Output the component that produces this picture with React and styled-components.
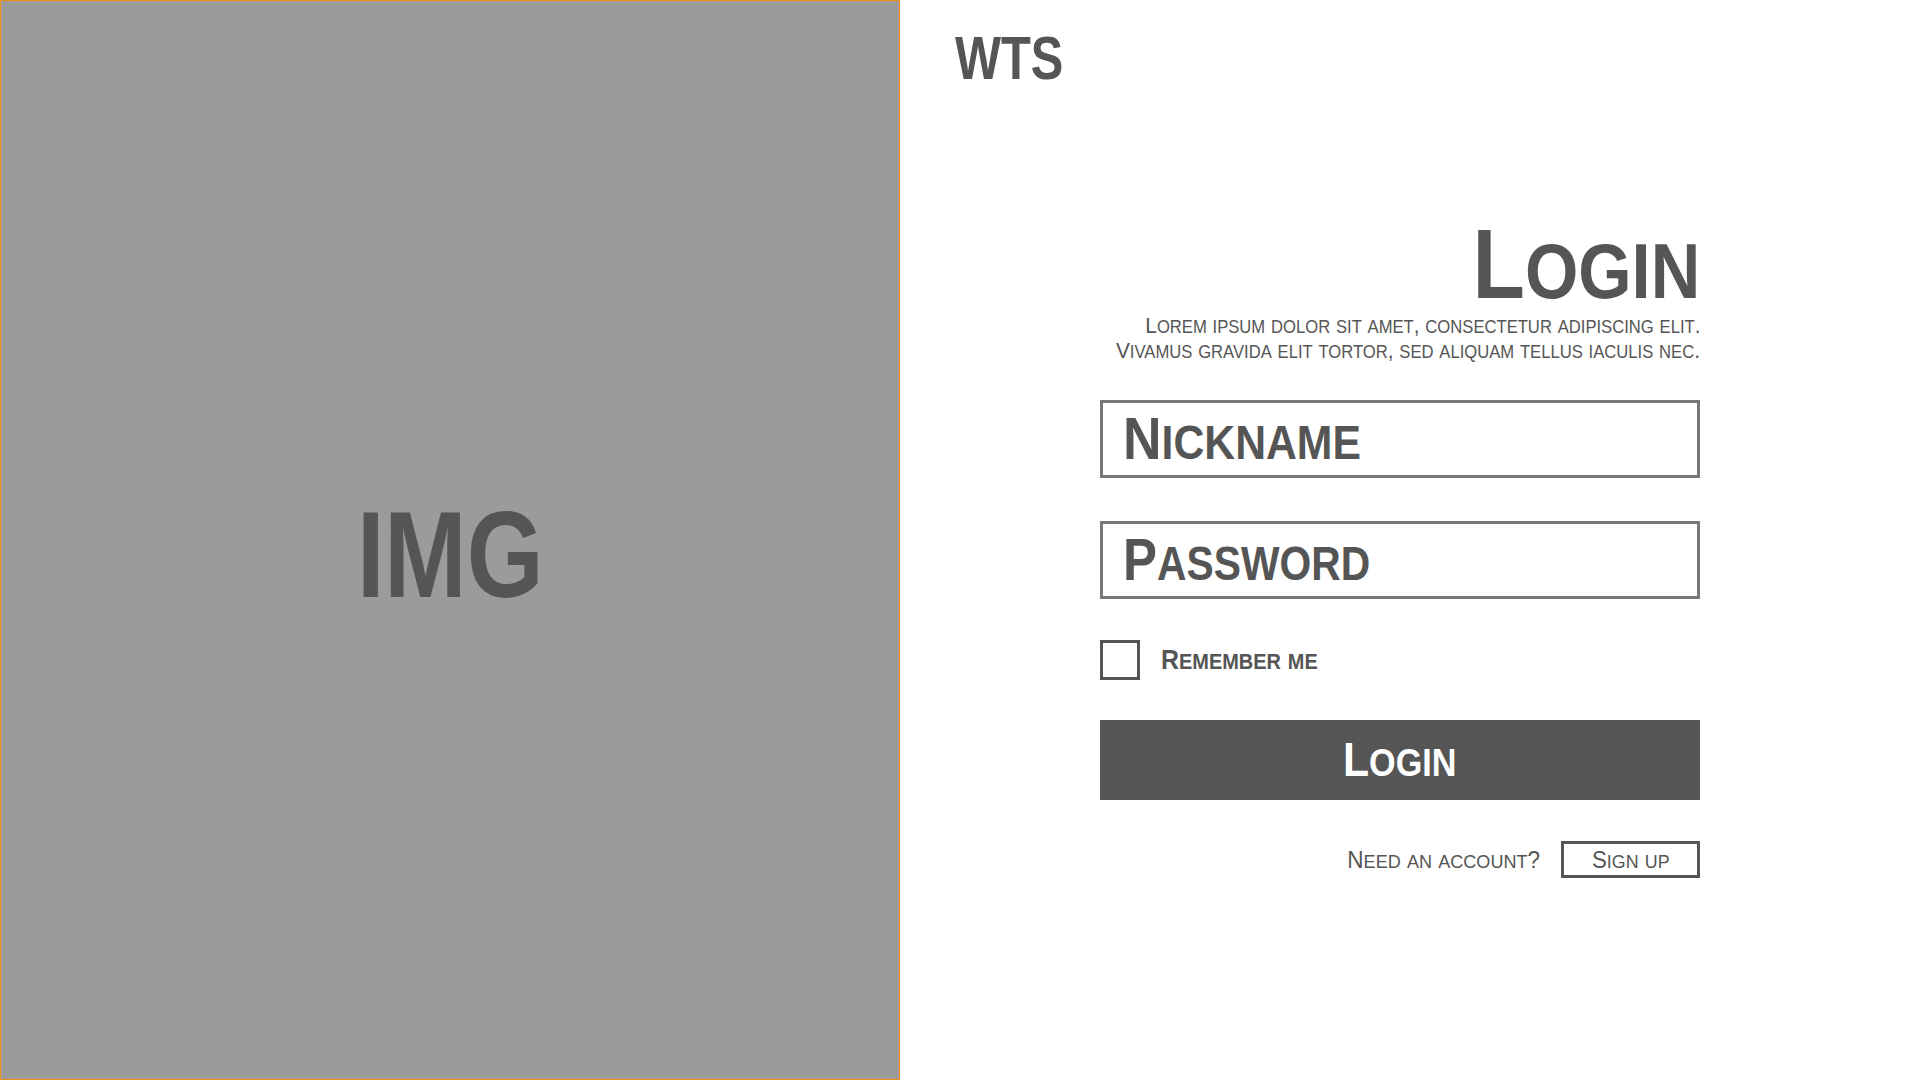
import React from "react";
import styled, { createGlobalStyle } from "styled-components";

const Global = createGlobalStyle`
  html, body { margin: 0; padding: 0; background: #ffffff; }
  body { font-family: "Liberation Sans", Arial, sans-serif; color: #555555; }
  * { box-sizing: border-box; }
`;

const Page = styled.div`
  display: grid;
  grid-template-columns: 900px 1fr;
  width: 1920px;
  height: 1080px;
  overflow: hidden;
`;

const ImagePanel = styled.div`
  background: #9b9b9b;
  border: 1px solid #f5901e;
  display: flex;
  align-items: center;
  justify-content: center;
`;

const ImgLabel = styled.span`
  font-weight: 700;
  font-size: 122px;
  line-height: 1;
  color: #555555;
  margin-top: 30px;
`;

const Side = styled.div`
  display: flex;
  flex-direction: column;
  align-items: flex-start;
  padding: 28px 0 0 55px;
`;

const Logo = styled.div`
  font-weight: 700;
  font-size: 61px;
  line-height: 1;
`;

const Form = styled.div`
  width: 600px;
  margin-left: 145px;
  margin-top: 126px;
  display: flex;
  flex-direction: column;
`;

const Title = styled.h1`
  margin: 0;
  font-weight: 700;
  font-size: 98px;
  line-height: 1;
  text-align: right;
`;

const Lead = styled.p`
  margin: 1px 0 0;
  font-size: 22px;
  line-height: 24px;
`;

const LeadLine = styled.span`
  display: flex;
  justify-content: flex-end;
`;

const Field = styled.div`
  margin-top: ${(p) => p.$gap}px;
  height: 78px;
  border: 3px solid #777777;
  display: flex;
  align-items: center;
  padding-left: 20px;
  font-weight: 700;
  font-size: 60px;
  line-height: 1;
`;

const CheckRow = styled.label`
  margin-top: 41px;
  display: flex;
  align-items: center;
  gap: 21px;
  font-weight: 700;
  font-size: 28px;
  line-height: 1;
`;

const Box = styled.span`
  width: 40px;
  height: 40px;
  border: 3px solid #555555;
  background: #ffffff;
`;

const SubmitButton = styled.button`
  margin-top: 40px;
  height: 80px;
  border: none;
  background: #555555;
  color: #ffffff;
  font-family: inherit;
  font-weight: 700;
  font-size: 48px;
  line-height: 1;
  padding: 0;
`;

const Footer = styled.div`
  margin-top: 41px;
  display: flex;
  justify-content: flex-end;
  align-items: center;
  gap: 21px;
  font-size: 24px;
  line-height: 1;
`;

const SignUp = styled.button`
  width: 139px;
  height: 37px;
  border: 3px solid #555555;
  background: #ffffff;
  color: #555555;
  font-family: inherit;
  font-size: 24px;
  line-height: 1;
  padding: 0;
`;

/* narrow face: the reference is set in a condensed sans */
const Squeeze = styled.span`
  display: inline-block;
  flex-shrink: 0;
  white-space: nowrap;
  transform: scaleX(${(p) => p.$sx});
  transform-origin: ${(p) => p.$origin || "center"};
`;

const Lower = styled.span`
  font-size: ${(p) => p.$ratio}em;
  text-transform: uppercase;
`;

function Caps({ children, ratio = 0.8 }) {
  const parts = children.split(/([a-z]+)/);
  return parts.map((p, i) =>
    i % 2 ? (
      <Lower key={i} $ratio={ratio}>
        {p}
      </Lower>
    ) : (
      <React.Fragment key={i}>{p}</React.Fragment>
    )
  );
}

export default function App() {
  return (
    <>
      <Global />
      <Page>
        <ImagePanel>
          <ImgLabel>
            <Squeeze $sx={0.81}>IMG</Squeeze>
          </ImgLabel>
        </ImagePanel>
        <Side>
          <Logo>
            <Squeeze $sx={0.8} $origin="left">WTS</Squeeze>
          </Logo>
          <Form>
            <Title>
              <Squeeze $sx={0.875} $origin="right">
                <Caps>Login</Caps>
              </Squeeze>
            </Title>
            <Lead>
              <LeadLine>
                <Squeeze $sx={0.945} $origin="right">
                  <Caps>Lorem ipsum dolor sit amet, consectetur adipiscing elit.</Caps>
                </Squeeze>
              </LeadLine>
              <LeadLine>
                <Squeeze $sx={0.945} $origin="right">
                  <Caps>Vivamus gravida elit tortor, sed aliquam tellus iaculis nec.</Caps>
                </Squeeze>
              </LeadLine>
            </Lead>
            <Field $gap={36}>
              <Squeeze $sx={0.89} $origin="left">
                <Caps>Nickname</Caps>
              </Squeeze>
            </Field>
            <Field $gap={43}>
              <Squeeze $sx={0.85} $origin="left">
                <Caps>Password</Caps>
              </Squeeze>
            </Field>
            <CheckRow>
              <Box />
              <Squeeze $sx={0.89} $origin="left">
                <Caps>Remember me</Caps>
              </Squeeze>
            </CheckRow>
            <SubmitButton>
              <Squeeze $sx={0.89}>
                <Caps>Login</Caps>
              </Squeeze>
            </SubmitButton>
            <Footer>
              <Squeeze $sx={0.94} $origin="right">
                <Caps>Need an account?</Caps>
              </Squeeze>
              <SignUp>
                <Squeeze $sx={0.93}>
                  <Caps>Sign up</Caps>
                </Squeeze>
              </SignUp>
            </Footer>
          </Form>
        </Side>
      </Page>
    </>
  );
}
